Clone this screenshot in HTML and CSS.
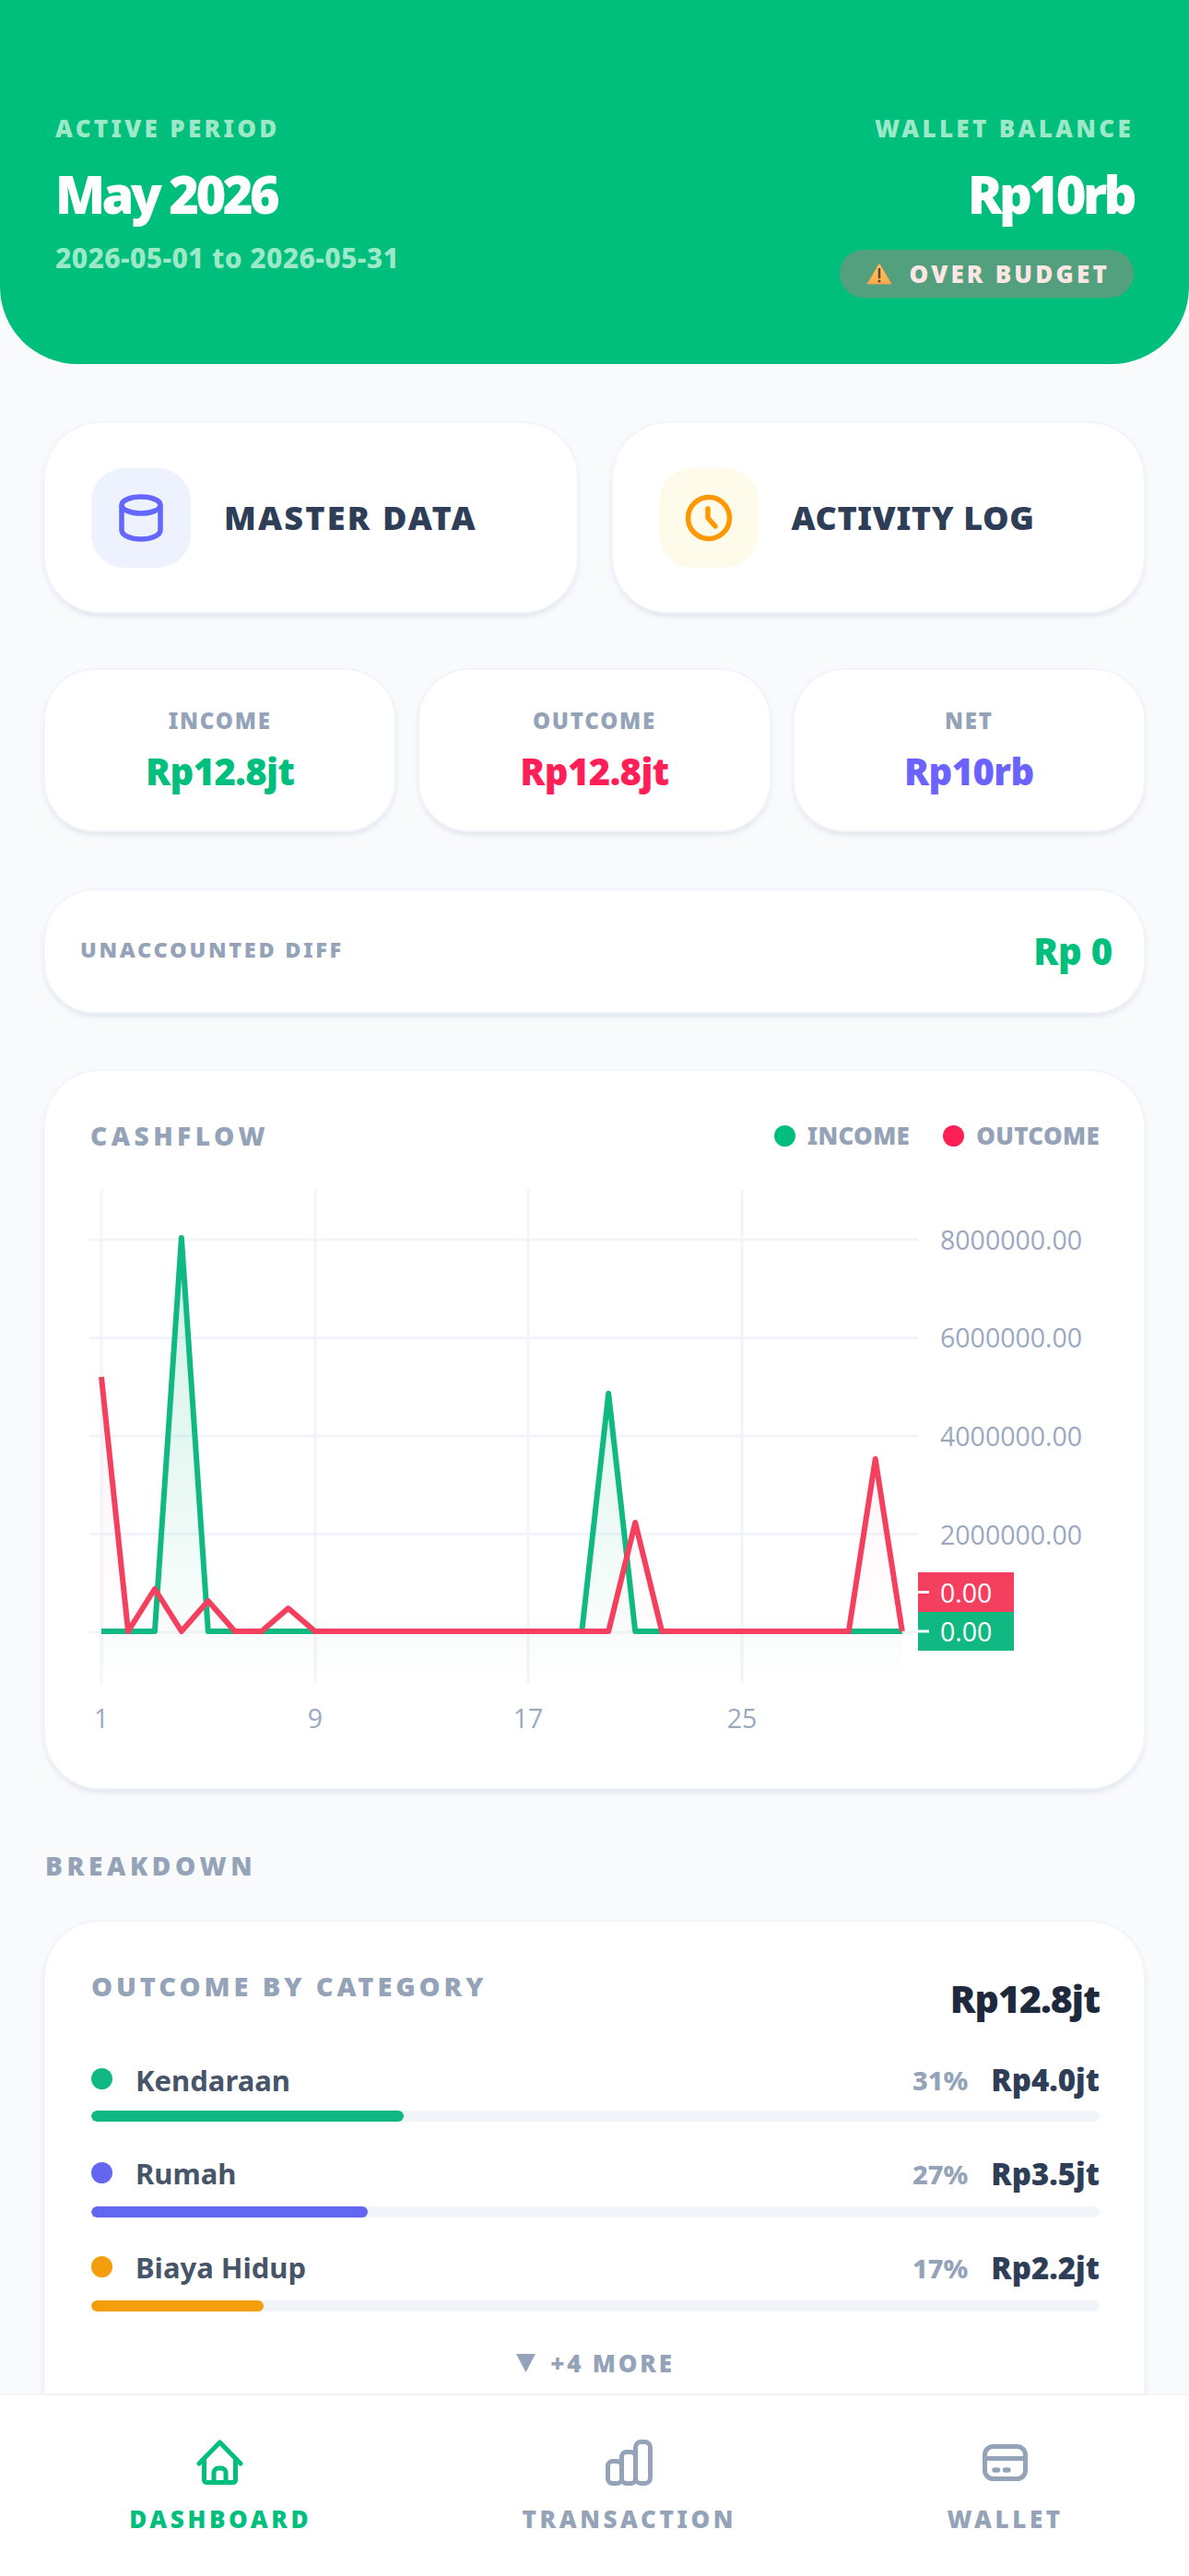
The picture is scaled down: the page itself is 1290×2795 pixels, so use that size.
FILE: index.html
```html
<!DOCTYPE html>
<html lang="en">
<head>
<meta charset="utf-8">
<title>Dashboard</title>
<link rel="stylesheet" href="styles.css">
</head>
<body>
<div class="app">
  <header class="hero">
    <div class="hero-col">
      <div class="hero-label">ACTIVE PERIOD</div>
      <div class="hero-title">May 2026</div>
      <div class="hero-date">2026-05-01 to 2026-05-31</div>
    </div>
    <div class="hero-col hero-right">
      <div class="hero-label">WALLET BALANCE</div>
      <div class="hero-title">Rp10rb</div>
      <div class="badge">
        <svg class="badge-icon" viewBox="0 0 28 24"><defs><linearGradient id="warn" x1="0" y1="0" x2="0" y2="1"><stop offset="0" stop-color="#ffcf62"/><stop offset="1" stop-color="#f9a94d"/></linearGradient></defs><path d="M14 1 L27 23 H1 Z" fill="url(#warn)" stroke="#f4a24a" stroke-width="1" stroke-linejoin="round"/><path d="M14 7 V16" stroke="#5b4a3a" stroke-width="2.6" stroke-linecap="round"/><circle cx="14" cy="20" r="1.5" fill="#5b4a3a"/></svg>
        <span>OVER BUDGET</span>
      </div>
    </div>
  </header>

  <main class="content">
    <section class="actions">
      <div class="card action">
        <div class="action-icon icon-indigo">
          <svg class="icon-svg" viewBox="0 0 48 52" fill="none" stroke="#6366ff" stroke-width="5.5"><ellipse cx="24" cy="12" rx="21" ry="9"/><path d="M3 12 V39 C3 45 13 49 24 49 C35 49 45 45 45 39 V12"/></svg>
        </div>
        <span class="action-text text-wide">MASTER DATA</span>
      </div>
      <div class="card action">
        <div class="action-icon icon-amber">
          <svg class="icon-svg" viewBox="0 0 52 52" fill="none" stroke="#ff9800" stroke-width="5.5" stroke-linecap="round" stroke-linejoin="round"><circle cx="26" cy="26" r="22.5"/><path d="M25 16 V26 L33 35"/></svg>
        </div>
        <span class="action-text">ACTIVITY LOG</span>
      </div>
    </section>

    <section class="stats">
      <div class="card stat"><div class="stat-label">INCOME</div><div class="stat-value c-green">Rp12.8jt</div></div>
      <div class="card stat"><div class="stat-label">OUTCOME</div><div class="stat-value c-red">Rp12.8jt</div></div>
      <div class="card stat"><div class="stat-label">NET</div><div class="stat-value c-indigo">Rp10rb</div></div>
    </section>

    <section class="card diff">
      <div class="diff-label">UNACCOUNTED DIFF</div>
      <div class="diff-value c-green">Rp 0</div>
    </section>

    <section class="card chart-card">
      <div class="chart-head">
        <div class="chart-title">CASHFLOW</div>
        <div class="legend">
          <span class="legend-item"><i class="dot bg-green"></i>INCOME</span>
          <span class="legend-item"><i class="dot bg-red"></i>OUTCOME</span>
        </div>
      </div>
      <svg class="chart" viewBox="97 1291 1096 610">
        <defs>
          <linearGradient id="gg" gradientUnits="userSpaceOnUse" x1="0" y1="1343" x2="0" y2="1826"><stop offset="0" stop-color="#10b981" stop-opacity=".2"/><stop offset="1" stop-color="#10b981" stop-opacity="0"/></linearGradient>
          <linearGradient id="gr" gradientUnits="userSpaceOnUse" x1="0" y1="1494" x2="0" y2="1826"><stop offset="0" stop-color="#f43f5e" stop-opacity=".06"/><stop offset="1" stop-color="#f43f5e" stop-opacity="0"/></linearGradient>
        </defs>
        <g class="grid">
          <path d="M110 1291V1826M342 1291V1826M573 1291V1826M805 1291V1826"/>
          <path d="M97 1345H996M97 1451.500H996M97 1558H996M97 1664.500H996M97 1771H996"/>
        </g>
        <polygon class="fill-g" points="110,1770 167.900,1770 196.900,1343 225.800,1770 631.300,1770 660.200,1512 689.200,1770 978.800,1770 978.800,1826 110,1826"/>
        <polygon class="fill-r" points="110,1494 139,1770 167.900,1724 196.900,1770 225.800,1737 254.800,1770 283.800,1770 312.700,1745 341.700,1770 660.200,1770 689.200,1652 718.100,1770 920.800,1770 949.700,1583 978.800,1770 978.800,1826 110,1826"/>
        <polyline class="line-g" points="110,1770 167.900,1770 196.900,1343 225.800,1770 631.300,1770 660.200,1512 689.200,1770 978.800,1770"/>
        <polyline class="line-r" points="110,1494 139,1770 167.900,1724 196.900,1770 225.800,1737 254.800,1770 283.800,1770 312.700,1745 341.700,1770 660.200,1770 689.200,1652 718.100,1770 920.800,1770 949.700,1583 978.800,1770"/>
        <g class="axis-y">
          <text x="1020" y="1356">8000000.00</text>
          <text x="1020" y="1462">6000000.00</text>
          <text x="1020" y="1569">4000000.00</text>
          <text x="1020" y="1676">2000000.00</text>
        </g>
        <rect class="tag-r" x="996" y="1706" width="104" height="43"/>
        <rect class="tag-g" x="996" y="1749" width="104" height="42"/>
        <path class="tick" d="M996 1727.500H1008M996 1770H1008"/>
        <g class="axis-tag">
          <text x="1020" y="1739">0.00</text>
          <text x="1020" y="1781">0.00</text>
        </g>
        <g class="axis-x">
          <text x="110" y="1875">1</text>
          <text x="342" y="1875">9</text>
          <text x="573" y="1875">17</text>
          <text x="805" y="1875">25</text>
        </g>
      </svg>
    </section>

    <h2 class="section-title">BREAKDOWN</h2>

    <section class="card cat-card">
      <div class="cat-head">
        <div class="cat-title">OUTCOME BY CATEGORY</div>
        <div class="cat-total">Rp12.8jt</div>
      </div>
      <div class="cat-row">
        <div class="cat-line"><i class="dot cat-dot bg-em"></i><span class="cat-name">Kendaraan</span><span class="cat-pct">31%</span><span class="cat-amt">Rp4.0jt</span></div>
        <div class="track"><div class="fill bg-em" style="width:31%"></div></div>
      </div>
      <div class="cat-row">
        <div class="cat-line"><i class="dot cat-dot bg-in"></i><span class="cat-name">Rumah</span><span class="cat-pct">27%</span><span class="cat-amt">Rp3.5jt</span></div>
        <div class="track"><div class="fill bg-in" style="width:27.400%"></div></div>
      </div>
      <div class="cat-row">
        <div class="cat-line"><i class="dot cat-dot bg-am"></i><span class="cat-name">Biaya Hidup</span><span class="cat-pct">17%</span><span class="cat-amt">Rp2.2jt</span></div>
        <div class="track"><div class="fill bg-am" style="width:17.100%"></div></div>
      </div>
      <div class="more"><svg class="more-icon" viewBox="0 0 21 20"><path d="M0 0 H21 L10.500 20 Z"/></svg><span>+4 MORE</span></div>
    </section>
  </main>

  <nav class="tabbar">
    <div class="tab tab-active">
      <svg class="tab-icon" viewBox="0 0 52 52" fill="none" stroke="currentColor" stroke-width="5" stroke-linecap="round" stroke-linejoin="round"><path d="M3 26 L25.500 3 L48 26"/><path d="M8.500 21 V44 a2.500 2.500 0 0 0 2.500 2.500 H40 a2.500 2.500 0 0 0 2.500 -2.500 V21"/><path d="M19 46 V36 a5 5 0 0 1 5 -5 h3 a5 5 0 0 1 5 5 V46" stroke-linecap="butt"/></svg>
      <span>DASHBOARD</span>
    </div>
    <div class="tab">
      <svg class="tab-icon" viewBox="0 0 52 52" fill="none" stroke="currentColor" stroke-width="5"><rect x="2.500" y="23.500" width="15" height="24" rx="5"/><rect x="17.500" y="13.500" width="15" height="34" rx="5"/><rect x="32.500" y="2.500" width="16" height="45" rx="6"/></svg>
      <span>TRANSACTION</span>
    </div>
    <div class="tab">
      <svg class="tab-icon" viewBox="0 0 52 52" fill="none" stroke="currentColor" stroke-width="5"><rect x="3.500" y="7.500" width="44" height="35" rx="9"/><path d="M3.500 20.500 H47.500"/><path d="M14 33 H17.500 M25.500 33 H29" stroke-width="5.500" stroke-linecap="round"/></svg>
      <span>WALLET</span>
    </div>
  </nav>
</div>
</body>
</html>
```
FILE: styles.css
```css
* { box-sizing: border-box; }
html, body { margin: 0; padding: 0; }
body {
  background: #f8fafc;
  font-family: "Noto Sans", "Open Sans", sans-serif;
  overflow: hidden;
}
.app { position: relative; width: 1290px; height: 2795px; overflow: hidden; }

/* Hero */
.hero {
  height: 395px;
  background: #00bf7d;
  border-radius: 0 0 84px 84px;
  padding: 124px 60px 0;
  display: flex;
  justify-content: space-between;
  color: #fff;
}
.hero-col { display: flex; flex-direction: column; align-items: flex-start; }
.hero-right { align-items: flex-end; }
.hero-label { font-size: 26px; line-height: 30px; font-weight: 900; letter-spacing: 3.300px; color: #9de9c7; }
.hero-title { margin-top: 24px; font-size: 56px; line-height: 64px; font-weight: 900; letter-spacing: -3.600px; color: #fff; }
.hero-date { margin-top: 20px; font-size: 30px; line-height: 36px; font-weight: 800; letter-spacing: .4px; color: #9de9c7; }
.badge {
  margin-top: 29px;
  height: 52px;
  padding: 0 26px 0 29px;
  border-radius: 26px;
  background: #52a07e;
  display: flex;
  align-items: center;
  gap: 18px;
  font-size: 26px;
  font-weight: 900;
  letter-spacing: 3.200px;
  color: #fde6e4;
}
.badge-icon { width: 28px; height: 24px; display: block; }

/* Content */
.content { padding: 64px 49px 0; }
.card {
  background: #fff;
  border-radius: 60px;
  box-shadow: 0 0 0 2px #f1f5f9, 0 4px 6px rgba(148, 163, 184, .28);
}
.actions { display: grid; grid-template-columns: 1fr 1fr; gap: 39px; }
.action { height: 205px; padding: 0 50px; display: flex; align-items: center; gap: 36px; }
.action-icon { width: 108px; height: 108px; border-radius: 36px; display: flex; align-items: center; justify-content: center; flex: none; }
.icon-indigo { background: #eef2ff; }
.icon-amber { background: #fffbeb; }
.icon-svg { width: 52px; height: 52px; display: block; }
.action-text { font-size: 36px; font-weight: 900; letter-spacing: .6px; color: #2f3e57; }
.text-wide { letter-spacing: 2.200px; }

.stats { margin-top: 63px; display: grid; grid-template-columns: repeat(3, 1fr); gap: 27px; }
.stat { height: 174px; border-radius: 54px; text-align: center; padding-top: 40px; }
.stat-label { font-size: 24px; line-height: 30px; font-weight: 900; letter-spacing: 1.800px; color: #94a3b8; }
.stat-value { margin-top: 14px; font-size: 40px; line-height: 52px; font-weight: 900; letter-spacing: -.6px; }
.c-green { color: #00bf7d; }
.c-red { color: #ff1f57; }
.c-indigo { color: #6c63ff; }

.diff { margin-top: 65px; height: 132px; padding: 0 34px 0 38px; border-radius: 54px; display: flex; justify-content: space-between; align-items: center; }
.diff-label { font-size: 23.500px; line-height: 30px; font-weight: 900; letter-spacing: 2.700px; color: #94a3b8; margin-top: -4px; }
.diff-value { font-size: 40px; line-height: 52px; font-weight: 900; letter-spacing: -.2px; }

.chart-card { margin-top: 64px; height: 778px; padding: 0 48px; }
.chart-head { height: 129px; padding-top: 52px; display: flex; justify-content: space-between; align-items: flex-start; }
.chart-title { font-size: 28px; line-height: 36px; font-weight: 900; letter-spacing: 4.500px; color: #94a3b8; padding-left: 1px; }
.legend { display: flex; gap: 36px; }
.legend-item { display: flex; align-items: center; gap: 13px; font-size: 26px; line-height: 36px; font-weight: 900; letter-spacing: .3px; color: #94a3b8; }
.dot { display: block; width: 23px; height: 23px; border-radius: 50%; flex: none; }
.bg-green { background: #00bf7d; }
.bg-red { background: #ff1f57; }
.chart { display: block; width: 1096px; height: 610px; }
.grid path { stroke: #f1f5f9; stroke-width: 3; fill: none; }
.fill-g { fill: url(#gg); }
.fill-r { fill: url(#gr); }
.line-g, .line-r { fill: none; stroke-width: 6; stroke-linejoin: round; stroke-linecap: butt; }
.line-g { stroke: #10b981; }
.line-r { stroke: #f43f5e; }
.axis-y text, .axis-x text, .axis-tag text { font-family: "Open Sans", "Noto Sans", sans-serif; font-size: 28.500px; }
.axis-y text, .axis-x text { fill: #9aa9bf; }
.axis-x text { text-anchor: middle; }
.axis-tag text { fill: #fff; }
.tag-r { fill: #f43f5e; }
.tag-g { fill: #10b981; }
.tick { stroke: #fff; stroke-width: 3; fill: none; }

.section-title { margin: 66px 0 0; font-size: 28px; line-height: 36px; font-weight: 900; letter-spacing: 4.600px; color: #94a3b8; }

.cat-card { margin-top: 43px; height: 640px; padding: 0 48px 0 50px; }
.cat-head { display: flex; justify-content: space-between; align-items: flex-start; height: 140px; padding-top: 52px; }
.cat-title { font-size: 29px; line-height: 36px; font-weight: 900; letter-spacing: 3.900px; color: #94a3b8; }
.cat-total { font-size: 41px; line-height: 52px; font-weight: 900; letter-spacing: -1px; color: #1e293b; padding-top: 5px; }
.cat-row { height: 104px; }
.cat-line { height: 63px; margin-bottom: 2px; display: flex; align-items: center; }
.cat-row + .cat-row .cat-line { margin-top: -2px; height: 65px; margin-bottom: 2px; padding-bottom: 3px; }
.cat-dot { margin-top: -2px; margin-right: 25px; }
.cat-name { flex: 1; font-size: 31px; font-weight: 700; color: #475569; }
.cat-pct { font-size: 29px; font-weight: 800; color: #94a3b8; margin-right: 25px; }
.cat-amt { font-size: 33px; font-weight: 900; color: #2f3e57; letter-spacing: 0; }
.track { height: 12px; border-radius: 6px; background: #f1f5f9; overflow: hidden; }
.fill { height: 100%; border-radius: 6px; }
.bg-em { background: #10b981; }
.bg-in { background: #6366f1; }
.bg-am { background: #f59e0b; }
.more { margin-top: 15px; display: flex; justify-content: center; align-items: center; gap: 16px; font-size: 26px; line-height: 32px; font-weight: 900; letter-spacing: 2.800px; color: #94a3b8; }
.more-icon { width: 21px; height: 20px; fill: #94a3b8; display: block; }

/* Tab bar */
.tabbar {
  position: absolute;
  left: 0; right: 0; bottom: 0;
  height: 198px;
  background: #fff;
  border-top: 2px solid #f1f5f9;
  padding: 0 22px 0 26px;
  display: flex;
  justify-content: space-around;
  align-items: flex-start;
}
.tab { display: flex; flex-direction: column; align-items: center; color: #94a3b8; font-size: 26px; line-height: 32px; font-weight: 900; letter-spacing: 3.600px; padding-top: 48px; }
.tab-active { color: #00bf7d; }
.tab-icon { width: 52px; height: 52px; display: block; margin-bottom: 18px; }
```
